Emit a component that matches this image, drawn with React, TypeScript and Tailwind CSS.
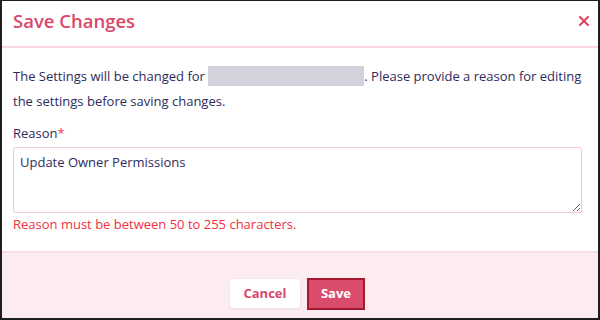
import React, { useState } from 'react';

const App: React.FC = () => {
  const [reason, setReason] = useState('Update Owner Permissions');

  return (
    <div
      className="w-[600px] h-[320px] bg-white border-t border-x-2 border-b-2 border-[#1e1e1e] flex flex-col overflow-hidden"
      style={{ fontFamily: '"Open Sans", "Noto Sans", sans-serif' }}
    >
      {/* Header */}
      <div className="h-[47px] shrink-0 flex items-center justify-between pl-[11px] pr-[7px] border-b-2 border-[#fcd5de]">
        <h2 className="text-[18.5px] font-semibold text-[#d9486a] leading-none -mt-[5px]">Save Changes</h2>
        <button className="w-[14px] h-[14px] flex items-center justify-center text-[#e0405f] -mt-[5px]">
          <svg width="10" height="10" viewBox="0 0 10 10" fill="none">
            <path d="M1 1L9 9M9 1L1 9" stroke="currentColor" strokeWidth="2" strokeLinecap="square" />
          </svg>
        </button>
      </div>

      {/* Body */}
      <div className="flex-1 px-[11px] pt-[16px] text-[#2e2b5c] text-[13px]">
        <p className="leading-[25px]">
          The Settings will be changed for{' '}
          <span className="inline-block align-middle w-[156px] h-[20px] bg-[#d3d2dc] -mt-[3px]" />
          . Please provide a reason for editing the settings before saving changes.
        </p>

        <label className="block mt-[9px] leading-[20px]">
          Reason<span className="text-[#e0405f]">*</span>
        </label>
        <textarea
          value={reason}
          onChange={(e) => setReason(e.target.value)}
          className="mt-[4px] block w-[569px] h-[66px] rounded-[3px] border border-[#f7c3ce] px-[6px] py-[5px] text-[13px] text-[#2e2b5c] outline-none"
        />
        <p className="mt-[1px] text-[#f0303f] leading-[20px]">Reason must be between 50 to 255 characters.</p>
      </div>

      {/* Footer */}
      <div className="h-[67px] shrink-0 bg-[#fcebef] border-t-2 border-[#f8dde4] flex items-start justify-center gap-[7px] pt-[26px] pr-[5px]">
        <button className="w-[70px] h-[29px] bg-white rounded-[3px] shadow-[0_1px_3px_rgba(0,0,0,0.08)] text-[13px] font-bold text-[#d9486a]">
          Cancel
        </button>
        <button className="w-[58px] h-[32px] -mt-[1px] bg-[#d94c6c] border-2 border-[#a5172e] text-[13px] font-bold text-white">
          Save
        </button>
      </div>
    </div>
  );
};

export default App;
